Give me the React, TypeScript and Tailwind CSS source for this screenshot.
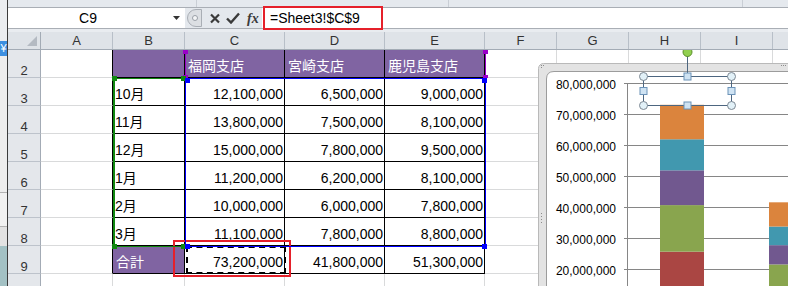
import clsx from "clsx";

const cols = [
  { key: "A", w: "w-[72px]" },
  { key: "B", w: "w-[72px]" },
  { key: "C", w: "w-[100px]" },
  { key: "D", w: "w-[100px]" },
  { key: "E", w: "w-[100px]" },
  { key: "F", w: "w-[72px]" },
  { key: "G", w: "w-[72px]" },
  { key: "H", w: "w-[72px]" },
  { key: "I", w: "w-[72px]" },
  { key: "J", w: "w-[72px]" },
];

const rows = [2, 3, 4, 5, 6, 7, 8, 9, 10];

const data: Record<number, string[]> = {
  2: ["", "福岡支店", "宮崎支店", "鹿児島支店"],
  3: ["10月", "12,100,000", "6,500,000", "9,000,000"],
  4: ["11月", "13,800,000", "7,500,000", "8,100,000"],
  5: ["12月", "15,000,000", "7,800,000", "9,500,000"],
  6: ["1月", "11,200,000", "6,200,000", "8,100,000"],
  7: ["2月", "10,000,000", "6,000,000", "7,800,000"],
  8: ["3月", "11,100,000", "7,800,000", "8,800,000"],
  9: ["合計", "73,200,000", "41,800,000", "51,300,000"],
};

// stacked values (millions) per branch, 10月..3月
const series = ["#4572a7", "#aa4643", "#89a54e", "#71588f", "#4198af", "#db843d"];
const bars = [
  { x: 122, values: [12.1, 13.8, 15.0, 11.2, 10.0, 11.1] },
  { x: 231, values: [6.5, 7.5, 7.8, 6.2, 6.0, 7.8] },
];

const yOf = (v: number) => 33.7 + (80 - v) * 3.105;

function SheetCell({ ci, r }: { ci: number; r: number }) {
  const inTable = r >= 2 && r <= 9;
  const inCols = ci >= 1 && ci <= 4;
  const purple = (r === 2 && inCols) || (r === 9 && ci === 1);
  const text = inTable && inCols ? data[r][ci - 1] : "";
  const right = ci >= 2 && r >= 3;
  return (
    <div
      className={clsx(
        "flex h-full shrink-0 items-end border-r border-b pb-[3px] text-[14px] leading-[16px] whitespace-nowrap",
        cols[ci].w,
        inTable && ci <= 4 ? "border-r-black" : "border-r-[#d9dadb]",
        inTable && inCols ? "border-b-black" : "border-b-[#d9dadb]",
        purple ? "bg-[#8064a2] text-white" : "text-black",
        right ? "justify-end pr-[1px]" : r === 2 || r === 9 ? "pl-[3px]" : "pl-[2px]",
      )}
    >
      {text}
    </div>
  );
}

function Chart() {
  return (
    <svg
      width={250}
      height={236}
      className="absolute top-0 left-[530px]"
      fontFamily="'Liberation Sans', Arial, sans-serif"
    >
      <rect x={0.5} y={13.5} width={270} height={240} rx={5} fill="#e3e3e3" stroke="#b9b9b9" />
      {[
        [3, 15],
        [5, 15],
        [3, 17],
        [243, 15],
        [245, 15],
        [247, 15],
        [3, 163],
        [3, 166],
        [3, 169],
        [3, 172],
      ].map(([x, y]) => (
        <rect key={`${x}-${y}`} x={x} y={y} width={1} height={1} fill="#8c8c8c" />
      ))}
      <path d="M8.5 240 V29 Q8.5 21.5 16 21.5 H260 V240 Z" fill="#ffffff" />
      <path d="M8.5 240 V29 Q8.5 21.5 16 21.5 H260" fill="none" stroke="#9c9c9c" />

      {[80, 70, 60, 50, 40, 30, 20].map((v) => {
        const y = Math.round(yOf(v)) - 0.5;
        return (
          <g key={v}>
            <line x1={86} x2={250} y1={y} y2={y} stroke="#868686" />
            <text x={78} y={y + 5} fontSize={12} textAnchor="end" fill="#000">
              {v},000,000
            </text>
          </g>
        );
      })}
      <line x1={89.5} x2={89.5} y1={33.5} y2={236} stroke="#868686" />

      {bars.map((b) => {
        let acc = 0;
        return (
          <g key={b.x}>
            {b.values.map((v, i) => {
              const y1 = yOf(acc + v);
              const y0 = yOf(acc);
              acc += v;
              return <rect key={i} x={b.x} y={y1} width={44} height={y0 - y1} fill={series[i]} />;
            })}
          </g>
        );
      })}

      {/* selected chart title */}
      <line x1={149.5} x2={149.5} y1={2} y2={26} stroke="#4d6680" />
      <circle cx={149.5} cy={2} r={4.5} fill="#92d050" stroke="#5b8f2a" />
      <rect x={105.5} y={26.5} width={88} height={29} fill="none" stroke="#4d6680" />
      {[
        [105.5, 26.5],
        [193.5, 26.5],
        [105.5, 55.5],
        [193.5, 55.5],
      ].map(([x, y]) => (
        <circle key={`${x}-${y}`} cx={x} cy={y} r={4} fill="#e2f1f8" stroke="#7d8893" />
      ))}
      {[
        [149.5, 26.5],
        [149.5, 55.5],
        [105.5, 41],
        [193.5, 41],
      ].map(([x, y]) => (
        <rect key={`${x}-${y}`} x={x - 3.5} y={y - 3.5} width={7} height={7} fill="#cfe3f3" stroke="#6c93b8" />
      ))}
    </svg>
  );
}

export default function App() {
  return (
    <div className="relative flex h-[286px] w-[788px] overflow-hidden bg-white font-['Liberation_Sans','Noto_Sans_CJK_JP',sans-serif]">
      {/* neighbouring window strip */}
      <div className="flex h-full w-[8px] shrink-0 flex-col border-r border-r-[#3b3b3b]">
        <div className="h-[41px] bg-[#ebedf0]" />
        <div className="flex h-[15px] items-center justify-center bg-[#3d8fe0] text-[11px] leading-none text-white">
          ¥
        </div>
        <div className="h-[137px] border-b border-[#b3b3b3] bg-[#ededed]" />
        <div className="h-[34px] border-b border-[#b3b3b3] bg-[#f1f1f1]" />
        <div className="h-[19px] bg-[#e2e2e2]" />
        <div className="flex-1 bg-[#a3c1c4]" />
      </div>

      <div className="flex min-w-0 flex-1 flex-col">
        {/* ribbon edge */}
        <div className="flex h-[7px] bg-[#e5e9ee]">
          <div className="w-[189px] border-r border-[#c9ced5]" />
          <div className="w-[252px] border-r border-[#c9ced5]" />
          <div className="w-[294px] border-r border-[#c9ced5]" />
        </div>

        {/* formula bar */}
        <div className="flex h-[22px] border-y border-[#a9aeb5]">
          <div className="flex w-[160px] items-center justify-center bg-white text-[14px] text-black">C9</div>
          <div className="flex w-[17px] items-center justify-center bg-white">
            <svg width="7" height="4" viewBox="0 0 7 4">
              <path d="M0 0 H7 L3.5 4 Z" fill="#333" />
            </svg>
          </div>
          <div className="flex w-[77px] items-center bg-[#e4e8ed] pl-[2px]">
            <div className="flex h-[18px] w-[15px] items-center justify-center rounded-l-full border border-[#a9aeb5] bg-[#dcdfe3]">
              <div className="h-[6px] w-[6px] rounded-full border border-[#9aa0a8] bg-[#f4f5f6]" />
            </div>
            <svg width="10" height="11" viewBox="0 0 10 11" className="ml-[8px]">
              <path d="M1 1.5 L9 9.5 M9 1.5 L1 9.5" stroke="#3a3a3a" strokeWidth="2.2" />
            </svg>
            <svg width="14" height="12" viewBox="0 0 14 12" className="ml-[6px]">
              <path d="M1 6.5 L5 10.5 L13 1.5" stroke="#3a3a3a" strokeWidth="2.4" fill="none" />
            </svg>
            <span className="ml-[7px] font-['Liberation_Serif',serif] text-[14px] font-bold italic text-[#3a3a3a]">
              fx
            </span>
          </div>
          <div className="flex flex-1 items-center bg-white pl-[8px] text-[14px] text-black">=Sheet3!$C$9</div>
        </div>
        <div className="h-[3px] bg-[#e9ecf0]" />

        {/* column headings */}
        <div className="flex h-[18px] border-b border-[#a3abb5] bg-[#dfe3e8] text-[13px] leading-none text-[#333]">
          <div className="relative w-[33px] shrink-0 border-r border-[#a3abb5]">
            <svg width="10" height="10" className="absolute right-[3px] bottom-[3px]">
              <path d="M10 0 V10 H0 Z" fill="#b4bac2" />
            </svg>
          </div>
          {cols.map((c) => (
            <div
              key={c.key}
              className={clsx("flex shrink-0 items-center justify-center border-r border-[#b8bfc8]", c.w)}
            >
              {c.key === "J" ? "" : c.key}
            </div>
          ))}
        </div>

        {/* sheet body */}
        <div className="relative flex-1 overflow-hidden">
          {rows.map((r) => (
            <div key={r} className="flex h-[28px]">
              <div className="flex h-full w-[33px] shrink-0 items-end justify-center border-r border-b border-r-[#a3abb5] border-b-[#bdc3cb] bg-[#e4e7eb] text-[13px] leading-[12px] text-[#333]">
                {r}
              </div>
              {cols.map((c, ci) => (
                <SheetCell key={c.key} ci={ci} r={r} />
              ))}
            </div>
          ))}

          {/* copy marquee on C9 */}
          <div className="absolute top-[196px] left-[178px] h-[28px] w-[100px] border-2 border-dashed border-black" />
          <div className="absolute top-[190px] left-[165px] h-[37px] w-[118px] border-2 border-[#e5202a]" />

          {/* chart range highlights */}
          <div className="absolute top-0 left-[177px] h-[28px] w-[1px] bg-[#9a00c8]" />
          <div className="absolute top-0 left-[477px] h-[28px] w-[1px] bg-[#9a00c8]" />
          <div className="absolute top-0 left-[175px] h-[4px] w-[5px] bg-[#9a00c8]" />
          <div className="absolute top-0 left-[475px] h-[4px] w-[5px] bg-[#9a00c8]" />
          <div className="absolute top-[25px] left-[175px] h-[3px] w-[5px] bg-[#9a00c8]" />
          <div className="absolute top-[25px] left-[475px] h-[3px] w-[5px] bg-[#9a00c8]" />

          <div className="absolute top-[28px] left-[105px] h-[169px] w-[73px] border-y border-l-2 border-[#118811]" />
          <div className="absolute top-[26px] left-[104px] h-[5px] w-[5px] bg-[#118811]" />
          <div className="absolute top-[26px] left-[173px] h-[5px] w-[5px] bg-[#118811]" />
          <div className="absolute top-[194px] left-[104px] h-[5px] w-[5px] bg-[#118811]" />
          <div className="absolute top-[194px] left-[173px] h-[5px] w-[5px] bg-[#118811]" />

          <div className="absolute top-[28px] left-[177px] h-[169px] w-[301px] border border-[#0000ff]" />
          <div className="absolute top-[28px] left-[177px] h-[5px] w-[5px] bg-[#0000ff]" />
          <div className="absolute top-[28px] left-[474px] h-[5px] w-[5px] bg-[#0000ff]" />
          <div className="absolute top-[194px] left-[474px] h-[5px] w-[5px] bg-[#0000ff]" />
          <div className="absolute top-[194px] left-[177px] h-[5px] w-[5px] bg-[#0000ff]" />

          <Chart />
        </div>

        <div className="pointer-events-none absolute top-[6px] left-[263px] h-[24px] w-[120px] border-2 border-[#e5202a]" />
      </div>
    </div>
  );
}
